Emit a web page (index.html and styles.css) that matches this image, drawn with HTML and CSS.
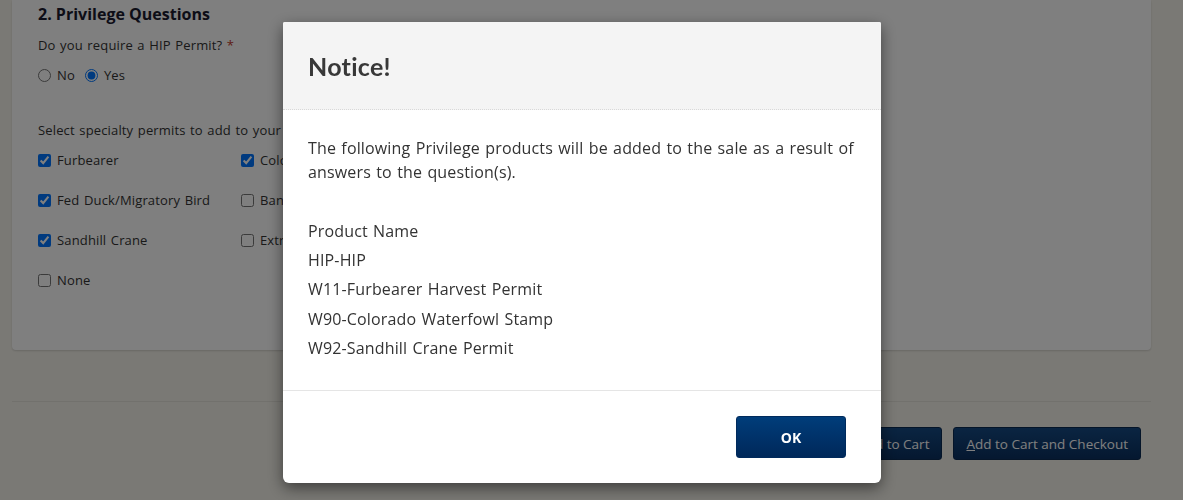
FILE: index.html
```html
<!DOCTYPE html>
<html lang="en">

<head>
    <meta charset="UTF-8">
    <meta name="viewport" content="width=device-width, initial-scale=1.0">
    <title>Privilege Questions</title>
    <link rel="stylesheet" href="styles.css">
</head>

<body>
    <div class="page">
        <div class="card">
            <h3>2. Privilege Questions</h3>
            <div class="question">Do you require a HIP Permit? <span class="req">*</span></div>
            <div class="radios">
                <label><input type="radio" name="hip"> No</label>
                <label><input type="radio" name="hip" checked> Yes</label>
            </div>
            <div class="question specialty">Select specialty permits to add to your purchase:</div>
            <div class="permits">
                <label><input type="checkbox" checked> Furbearer</label>
                <label><input type="checkbox" checked> Colorado Waterfowl</label>
                <label><input type="checkbox" checked> Fed Duck/Migratory Bird</label>
                <label><input type="checkbox"> Band-tailed Pigeon</label>
                <label><input type="checkbox" checked> Sandhill Crane</label>
                <label><input type="checkbox"> Extra Sandhill Crane</label>
                <label><input type="checkbox"> None</label>
            </div>
        </div>

        <div class="actions">
            <button type="button" class="btn-dark"><u>A</u>dd to Cart</button>
            <button type="button" class="btn-dark"><u>A</u>dd to Cart and Checkout</button>
        </div>
    </div>

    <div class="overlay"></div>

    <div class="modal">
        <div class="modal-header">
            <h2>Notice!</h2>
        </div>
        <div class="modal-body">
            <p>The following Privilege products will be added to the sale as a result of answers to the question(s).</p>
            <table class="products">
                <tr><td>Product Name</td></tr>
                <tr><td>HIP-HIP</td></tr>
                <tr><td>W11-Furbearer Harvest Permit</td></tr>
                <tr><td>W90-Colorado Waterfowl Stamp</td></tr>
                <tr><td>W92-Sandhill Crane Permit</td></tr>
            </table>
        </div>
        <div class="modal-footer">
            <button type="button" class="btn-ok">OK</button>
        </div>
    </div>
</body>

</html>
```

FILE: styles.css
```css
/* Global Reset */
* {
    box-sizing: border-box;
    margin: 0;
    padding: 0;
}

body {
    font-family: "Open Sans", Arial, sans-serif;
    background-color: #f5f3eb;
    color: #333;
    letter-spacing: 0.15px;
    word-spacing: 1px;
    height: 500px;
    overflow: hidden;
}

.page {
    padding: 0 32px 0 12px;
}

.card {
    background-color: #fff;
    border-radius: 0 0 4px 4px;
    box-shadow: 0 1px 2px rgba(0, 0, 0, 0.15);
    padding: 2px 26px 0;
    height: 350px;
}

h3 {
    font-size: 16px;
    line-height: 24px;
    color: #1a1a2e;
    letter-spacing: normal;
    word-spacing: normal;
}

.question {
    font-size: 13px;
    line-height: 20px;
    margin-top: 9px;
}

.req {
    color: #c0392b;
}

.radios {
    display: flex;
    gap: 10px;
    margin-top: 10px;
    font-size: 13px;
    line-height: 20px;
}

label {
    display: flex;
    align-items: center;
    gap: 6px;
}

input[type="radio"],
input[type="checkbox"] {
    width: 13px;
    height: 13px;
    margin: 0;
}

.specialty {
    margin-top: 35px;
}

.permits {
    display: grid;
    grid-template-columns: 203px 203px;
    row-gap: 20px;
    margin-top: 10px;
    font-size: 13px;
    line-height: 20px;
}

.actions {
    border-top: 1px solid #e4e2da;
    margin-top: 51px;
    padding: 25px 10px 0 0;
    display: flex;
    justify-content: flex-end;
    gap: 11px;
}

.btn-dark {
    background: linear-gradient(#154a84, #0a3060);
    color: #fff;
    border: 1px solid #0a2a52;
    border-radius: 3px;
    height: 33px;
    padding: 0 12px;
    font-family: inherit;
    font-size: 13.5px;
    letter-spacing: normal;
}

.overlay {
    position: fixed;
    inset: 0;
    background-color: rgba(0, 0, 0, 0.5);
}

.modal {
    position: fixed;
    left: 283px;
    top: 22px;
    width: 598px;
    height: 461px;
    background-color: #fff;
    border-radius: 2px 2px 6px 6px;
    box-shadow: 0 5px 15px rgba(0, 0, 0, 0.5);
    display: flex;
    flex-direction: column;
    overflow: hidden;
}

.modal-header {
    background-color: #f4f4f4;
    height: 88px;
    padding: 0 25px;
    display: flex;
    align-items: center;
    border-bottom: 1px dotted #d8d8d8;
}

.modal-header h2 {
    font-family: Lato, sans-serif;
    font-size: 25px;
    font-weight: 700;
    letter-spacing: 0.3px;
    color: #383838;
}

.modal-body {
    flex: 1;
    padding: 26px 25px 0;
    font-size: 16px;
}

.modal-body p {
    line-height: 24px;
}

.products {
    margin-top: 32px;
    border-collapse: collapse;
}

.products td {
    height: 29.3px;
    padding: 0;
}

.modal-footer {
    border-top: 1px solid #e5e5e5;
    height: 93px;
    padding: 25px 35px 0 0;
    display: flex;
    justify-content: flex-end;
}

.btn-ok {
    width: 110px;
    height: 42px;
    background: linear-gradient(#003d7a, #00285a);
    color: #fff;
    border: 1px solid #002a5c;
    border-radius: 3px;
    font-family: inherit;
    font-size: 14px;
    font-weight: 700;
    letter-spacing: normal;
    cursor: pointer;
}
```
